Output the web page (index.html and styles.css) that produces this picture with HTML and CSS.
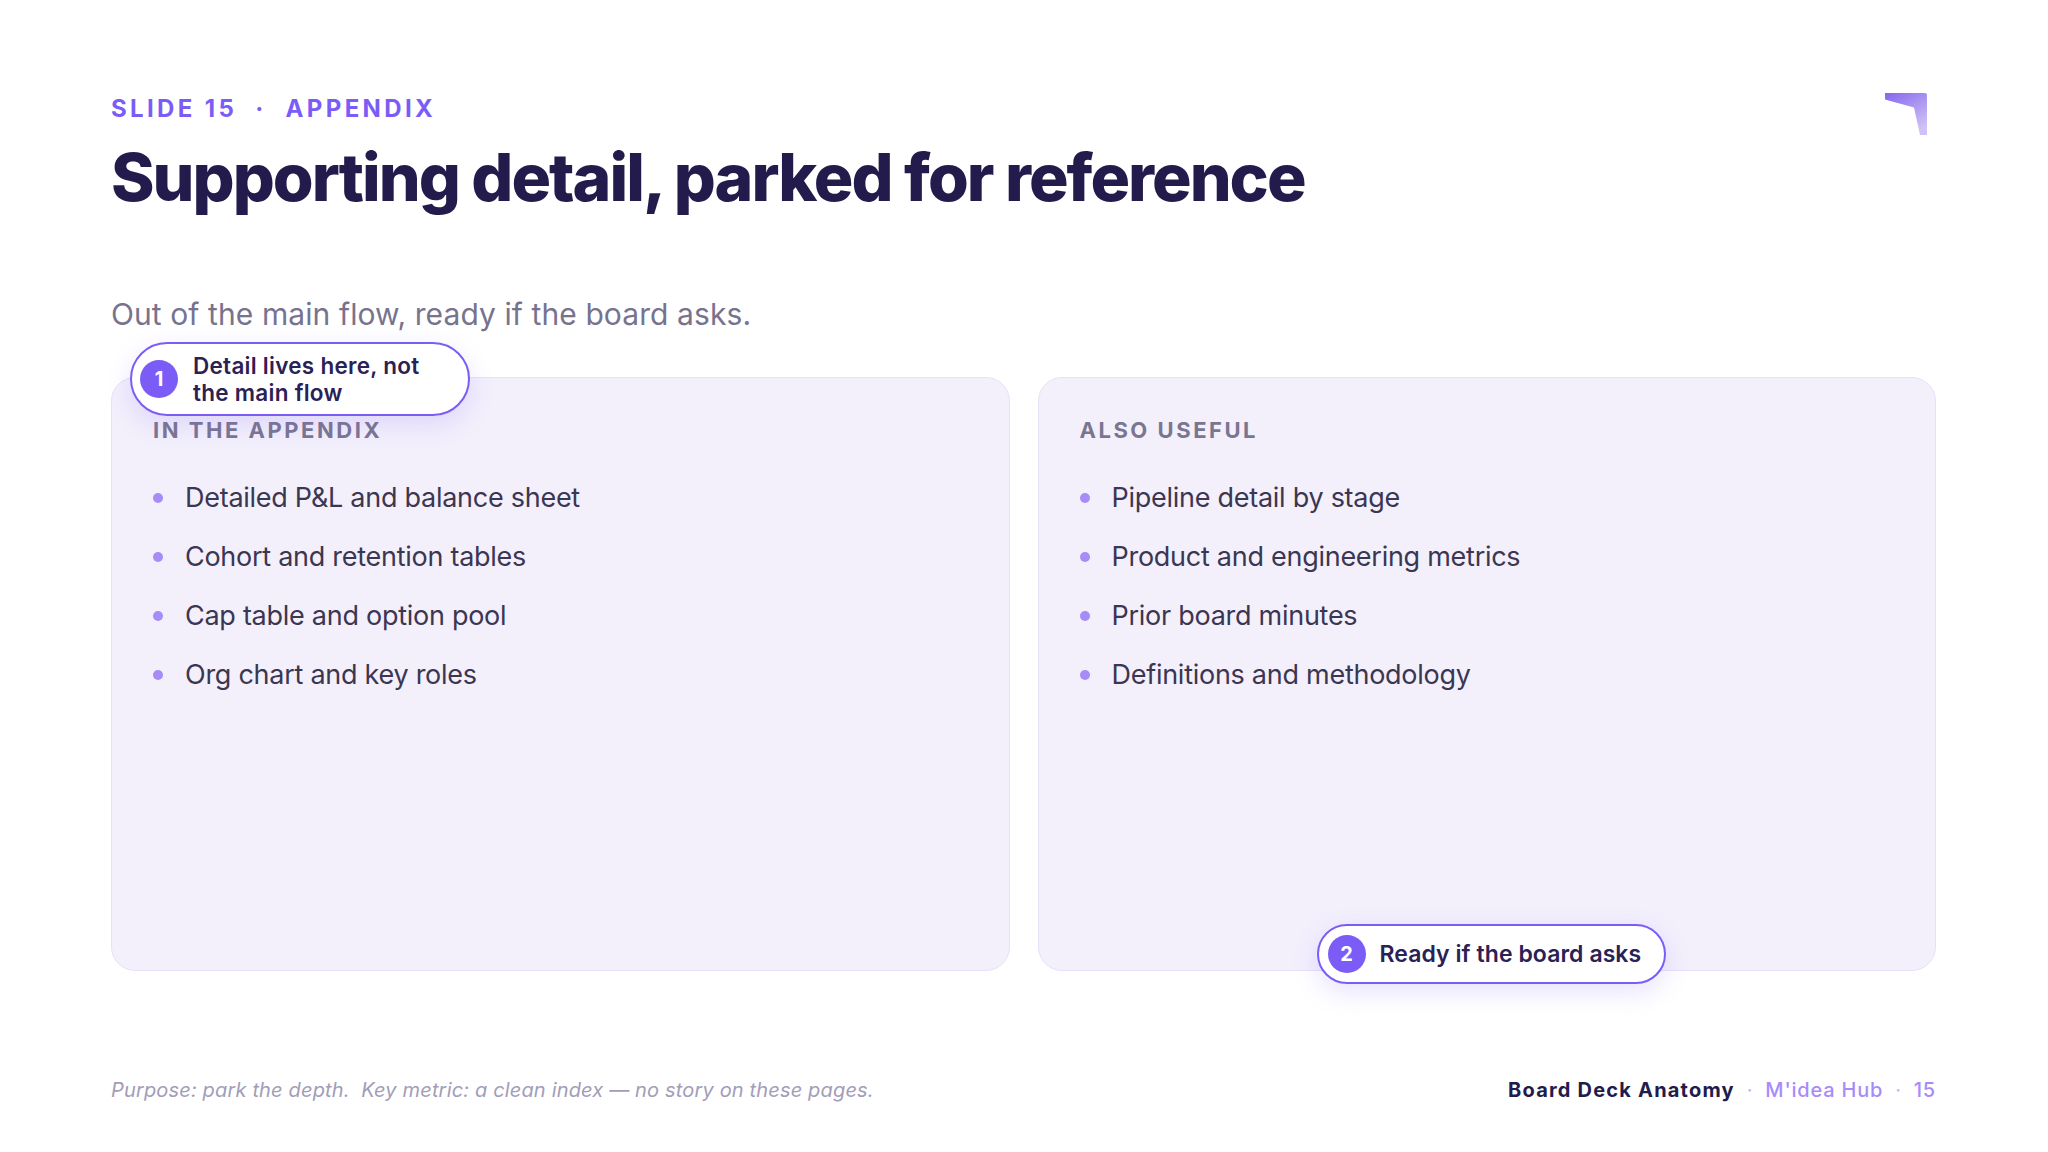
FILE: index.html
```html
<!DOCTYPE html>
<html lang="en">
<head>
<meta charset="utf-8">
<title>Slide 15 · Appendix</title>
<link rel="stylesheet" href="styles.css">
</head>
<body>
<div class="slide">
  <header class="head">
    <div class="head-text">
      <p class="eyebrow">SLIDE 15<span class="sep">·</span>APPENDIX</p>
      <h1 class="title">Supporting detail, parked for reference</h1>
    </div>
    <svg class="logo" viewBox="0 0 43 43" width="43" height="43" aria-hidden="true">
      <defs>
        <linearGradient id="lg" x1="0" y1="0" x2="0.6" y2="1">
          <stop offset="0" stop-color="#8466ee"/>
          <stop offset="1" stop-color="#cfc2f4"/>
        </linearGradient>
      </defs>
      <path d="M0 0 H40 Q42 0 42 2 V42 H35 L29 14.5 L0 6.5 Z" fill="url(#lg)"/>
    </svg>
  </header>

  <p class="subtitle">Out of the main flow, ready if the board asks.</p>

  <main class="cards">
    <section class="card">
      <div class="callout callout-one">
        <span class="num">1</span>
        <span class="callout-text">Detail lives here, not the main flow</span>
      </div>
      <h2 class="card-head">IN THE APPENDIX</h2>
      <ul class="items">
        <li>Detailed P&amp;L and balance sheet</li>
        <li>Cohort and retention tables</li>
        <li>Cap table and option pool</li>
        <li>Org chart and key roles</li>
      </ul>
    </section>
    <section class="card">
      <h2 class="card-head">ALSO USEFUL</h2>
      <ul class="items">
        <li>Pipeline detail by stage</li>
        <li>Product and engineering metrics</li>
        <li>Prior board minutes</li>
        <li>Definitions and methodology</li>
      </ul>
      <div class="callout callout-two">
        <span class="num">2</span>
        <span class="callout-text">Ready if the board asks</span>
      </div>
    </section>
  </main>

  <footer class="foot">
    <p class="purpose">Purpose: park the depth.&nbsp; Key metric: a clean index — no story on these pages.</p>
    <p class="brand"><span class="deck">Board Deck Anatomy</span><span class="dot">·</span><span class="hub">M'idea Hub</span><span class="dot">·</span><span class="hub">15</span></p>
  </footer>
</div>
</body>
</html>
```

FILE: styles.css
```css
* { box-sizing: border-box; }

html, body {
  margin: 0;
  padding: 0;
  background: #ffffff;
}

body {
  font-family: "Inter", "Noto Sans", "Liberation Sans", sans-serif;
  color: #221b4b;
}

.slide {
  width: 2048px;
  height: 1152px;
  padding: 93px 112px 48px 111px;
  display: flex;
  flex-direction: column;
  overflow: hidden;
}

.head {
  display: flex;
  justify-content: space-between;
  align-items: flex-start;
}

.eyebrow {
  margin: 0;
  font-size: 24px;
  line-height: 32px;
  font-weight: 700;
  letter-spacing: 0.14em;
  color: #7c5cf6;
}

.eyebrow .sep {
  margin: 0 19px 0 18px;
}

.title {
  margin: 12px 0 0 0;
  font-size: 66px;
  line-height: 80px;
  font-weight: 800;
  letter-spacing: -0.03em;
  color: #221b4b;
}

.logo {
  display: block;
  width: 43px;
  height: 43px;
  margin-right: 8px;
}

.subtitle {
  margin: 77px 0 0 0;
  font-size: 30px;
  line-height: 40px;
  font-weight: 400;
  color: #77738f;
  letter-spacing: 0.003em;
}

.cards {
  margin-top: 43px;
  display: grid;
  grid-template-columns: 1fr 1fr;
  gap: 28px;
  height: 594px;
}

.card {
  position: relative;
  background: #f3f0fc;
  border: 1px solid #e7e1f8;
  border-radius: 24px;
  padding: 38px 40px 0 41px;
}

.card-head {
  margin: 0;
  font-size: 22px;
  line-height: 28px;
  font-weight: 700;
  letter-spacing: 0.115em;
  color: #7a7690;
}

.items {
  list-style: none;
  margin: 36px 0 0 0;
  padding: 0;
  display: flex;
  flex-direction: column;
  gap: 23px;
}

.items li {
  position: relative;
  padding-left: 32px;
  font-size: 27px;
  line-height: 36px;
  color: #3b3652;
  letter-spacing: -0.01em;
}

.items li::before {
  content: "";
  position: absolute;
  left: 0;
  top: 13px;
  width: 10px;
  height: 10px;
  border-radius: 50%;
  background: #a68cf8;
}

.callout {
  position: absolute;
  display: flex;
  align-items: center;
  gap: 15px;
  background: #ffffff;
  border: 2px solid #7c5cf6;
  border-radius: 40px;
  box-shadow: 0 8px 26px rgba(124, 92, 246, 0.18);
  color: #2a2155;
  font-weight: 600;
}

.num {
  flex: none;
  width: 38px;
  height: 38px;
  border-radius: 50%;
  background: #7c5cf6;
  color: #ffffff;
  font-size: 20px;
  font-weight: 700;
  display: flex;
  align-items: center;
  justify-content: center;
}

.callout-one {
  left: 18px;
  top: -36px;
  width: 340px;
  padding: 8px 24px 8px 8px;
}

.callout-one .callout-text {
  max-width: 250px;
  font-size: 22.5px;
  line-height: 27px;
  letter-spacing: 0.012em;
}

.callout-two {
  left: 278px;
  bottom: -14px;
  height: 60px;
  padding: 0 23px 0 9px;
  gap: 14px;
}

.callout-two .callout-text {
  font-size: 23px;
  line-height: 30px;
  letter-spacing: 0.003em;
}

.foot {
  margin-top: auto;
  display: flex;
  justify-content: space-between;
  align-items: baseline;
}

.purpose {
  margin: 0;
  font-size: 20px;
  line-height: 28px;
  font-style: italic;
  color: #a19db8;
  letter-spacing: 0.008em;
}

.brand {
  margin: 0;
  font-size: 20px;
  line-height: 28px;
  color: #a78bfa;
  letter-spacing: 0.04em;
}

.brand .deck {
  font-weight: 700;
  color: #221b4b;
  letter-spacing: 0.06em;
}

.brand .dot {
  margin: 0 12px;
  color: #c4b5fd;
}

.brand .hub {
  font-weight: 500;
}
```
